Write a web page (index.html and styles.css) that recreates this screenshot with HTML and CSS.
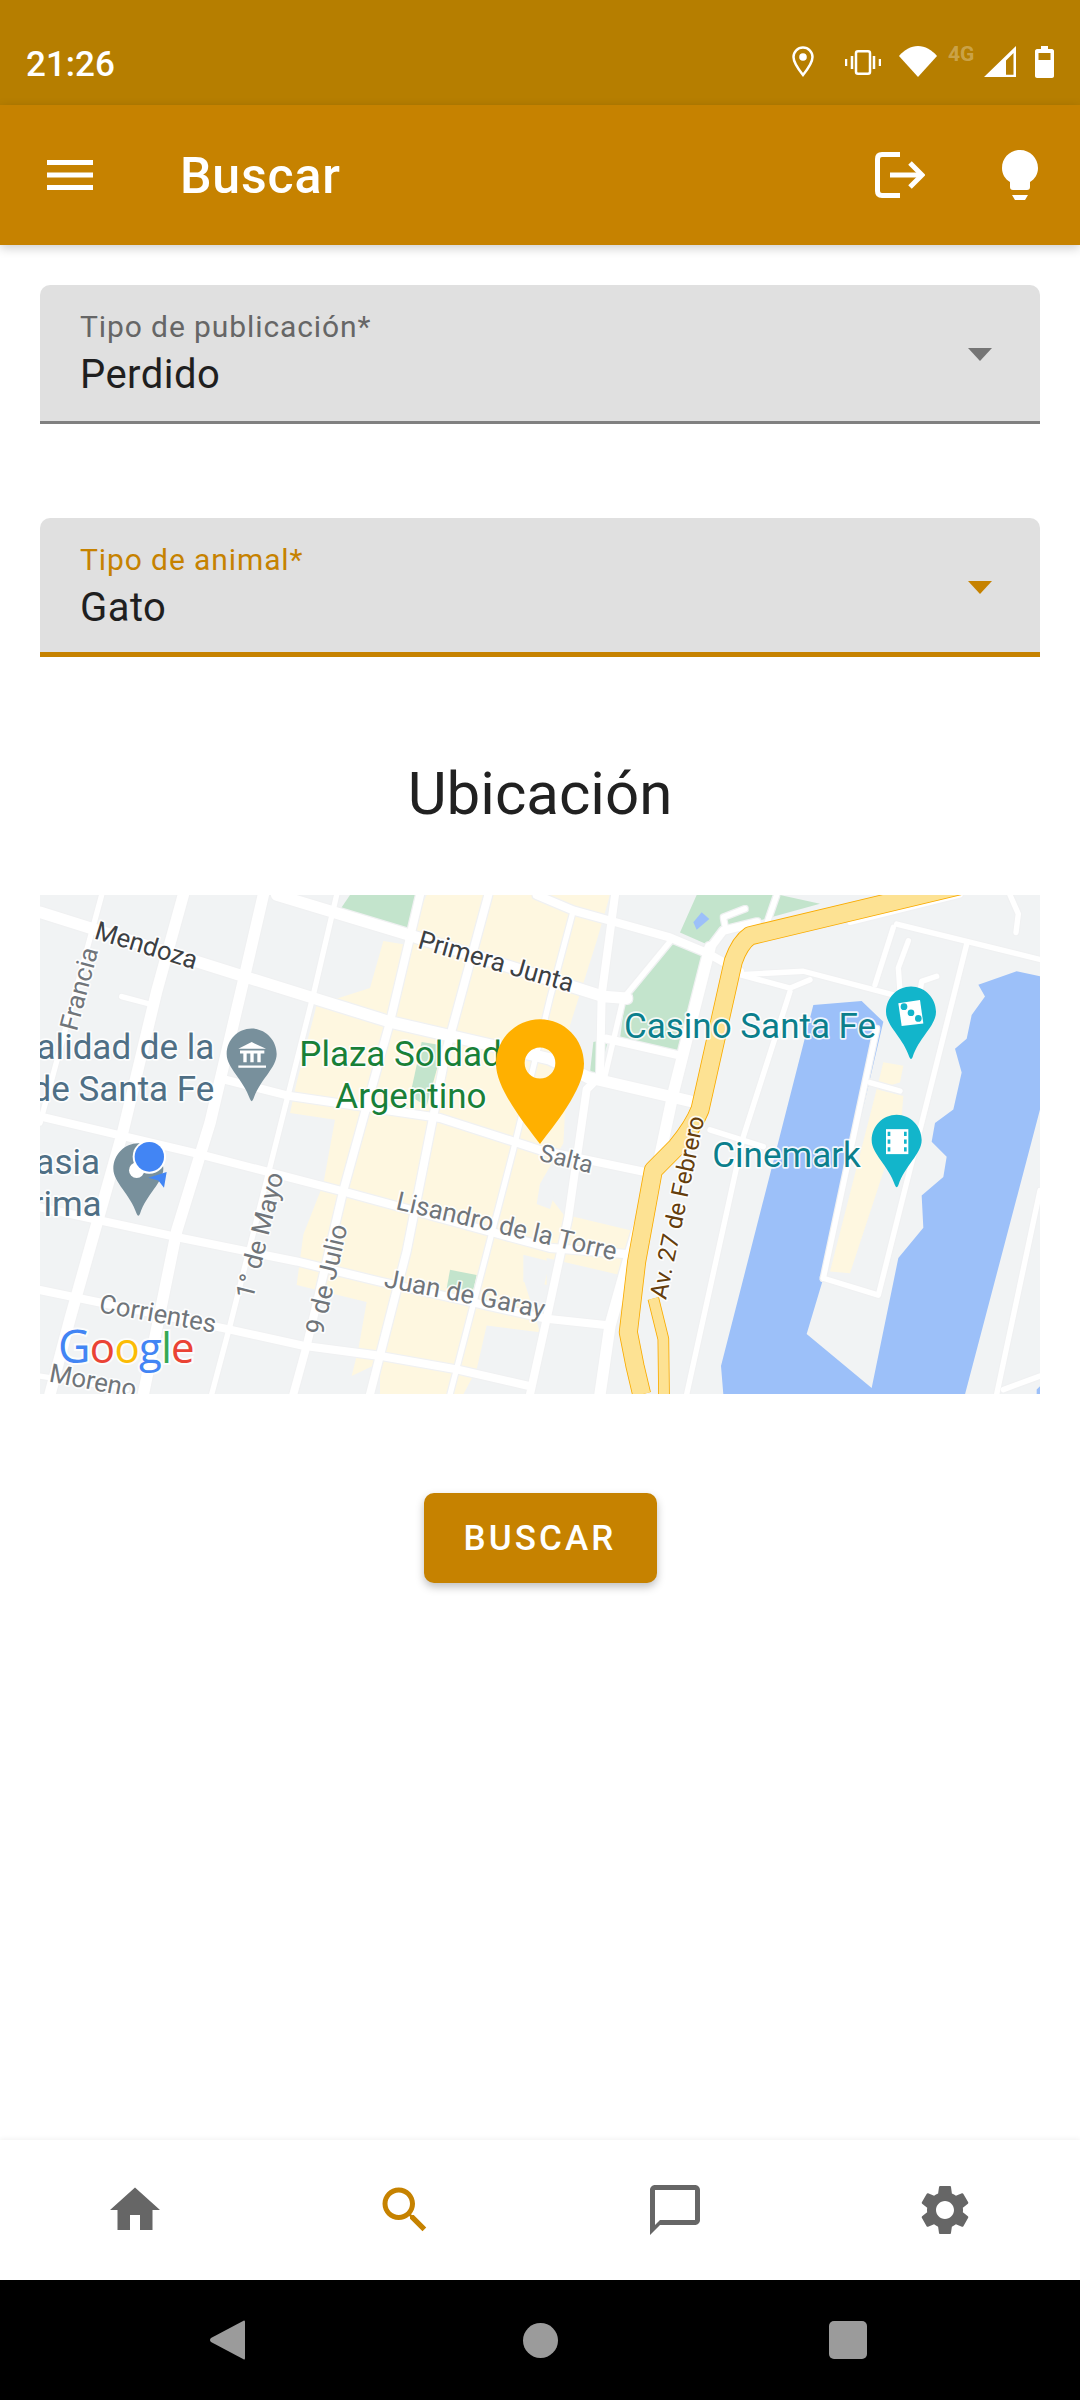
FILE: index.html
```html
<!DOCTYPE html>
<html>
<head>
    <title>Buscar</title>
    <link rel="stylesheet" href="styles.css">
</head>
<body>
    <div class="status-bar">
        <span class="time">21:26</span>
        <div class="status-icons">
            <svg class="st-pin" width="22" height="31" viewBox="0 0 22 31"><path d="M11 1.500C5.700 1.500 1.500 5.700 1.500 11C1.500 17 7 24 11 29C15 24 20.500 17 20.500 11C20.500 5.700 16.300 1.500 11 1.500Z" fill="none" stroke="#fff" stroke-width="2.500"/><circle cx="11" cy="11" r="3.800" fill="#fff"/></svg>
            <svg class="st-vibrate" width="36" height="25" viewBox="0 0 36 25"><g fill="none" stroke="#fff" stroke-width="2.500"><rect x="11" y="1.300" width="14" height="22.400" rx="2"/><path d="M7 6V19M29 6V19"/></g><path d="M1 9V16M35 9V16" stroke="#fff" stroke-width="2.500"/></svg>
            <svg class="st-wifi" width="38" height="31" viewBox="0 0 38 31"><path d="M19 31L0 10C5 4 12 0 19 0C26 0 33 4 38 10Z" fill="#fff"/></svg>
            <span class="st-net">4G</span>
            <svg class="st-signal" width="32" height="31" viewBox="0 0 32 31"><path fill-rule="evenodd" d="M32 0V31H0ZM29.500 7L22 14.500V28.800H29.500Z" fill="#fff"/></svg>
            <svg class="st-battery" width="19" height="32" viewBox="0 0 19 32"><path fill-rule="evenodd" d="M6 0H13V3H17C18 3 19 4 19 5V30C19 31 18 32 17 32H2C1 32 0 31 0 30V5C0 4 1 3 2 3H6ZM3.500 7V14H15.500V7Z" fill="#fff"/></svg>
        </div>
    </div>

    <div class="app-bar">
        <svg class="menu-icon" width="46" height="30" viewBox="0 0 46 30"><path d="M0 0H46V5H0ZM0 12.500H46V17.500H0ZM0 25H46V30H0Z" fill="#fff"/></svg>
        <span class="app-title">Buscar</span>
        <svg class="exit-icon" width="50" height="46" viewBox="0 0 50 46"><g fill="none" stroke="#fff" stroke-width="5"><path d="M25 2.500H7Q2.500 2.500 2.500 7V39Q2.500 43.500 7 43.500H25"/><path d="M15 23H46"/><path d="M35 11L47 23L35 35"/></g></svg>
        <svg class="bulb-icon" width="36" height="50" viewBox="0 0 36 50"><path d="M18 0C28 0 36 8 36 18C36 24 33 29 28 32V37C28 39 27 40 25 40H11C9 40 8 39 8 37V32C3 29 0 24 0 18C0 8 8 0 18 0Z" fill="#fff"/><path d="M10 45H26L23 50H13Z" fill="#fff"/></svg>
    </div>

    <div class="content">
        <div class="field">
            <div>
                <div class="field-label">Tipo de publicación*</div>
                <div class="field-value">Perdido</div>
            </div>
            <div class="arrow"></div>
        </div>
        <div class="field field-active">
            <div>
                <div class="field-label">Tipo de animal*</div>
                <div class="field-value">Gato</div>
            </div>
            <div class="arrow"></div>
        </div>

        <h2 class="section-title">Ubicación</h2>

        <svg class="map" width="1000" height="499" viewBox="30 44 3000 1479" preserveAspectRatio="none">
            <defs>
                <filter id="casing" x="-5%" y="-5%" width="110%" height="110%">
                    <feMorphology in="SourceAlpha" operator="dilate" radius="2.500"/>
                    <feColorMatrix values="0 0 0 0 .87  0 0 0 0 .88  0 0 0 0 .89  0 0 0 1 0"/>
                </filter>
                <path id="drop" d="M0 -75C41 -75 75 -41 75 0C75 42 24 76 5 134Q0 146 -5 134C-24 76 -75 42 -75 0C-75 -41 -41 -75 0 -75Z"/>
            </defs>
            <rect class="land" x="30" y="44" width="3000" height="1480"/>

            <polygon class="cream" points="1190,44 1740,44 1700,180 1620,430 1600,780 1530,900 1600,990 1810,1040 1770,1170 1550,1120 1550,1200 1480,1180 1530,1340 1370,1320 1340,1450 1300,1524 1050,1524 1050,1430 965,1470 985,1390 1010,1250 800,1200 820,1050 880,900 915,710 780,690 800,600 860,370 1020,320 1060,180 1120,190"/>
            <polygon class="cream" points="2560,540 2620,550 2610,600 2540,620 2620,640 2615,700 2460,1165 2400,1160 2540,620"/>
            <polygon class="land" points="1530,900 1580,910 1560,975 1520,960"/>
            <polygon class="land" points="1480,1110 1560,1130 1540,1210 1480,1190"/>

            <polygon class="park" points="960,44 925,95 1130,160 1160,44"/>
            <polygon class="park" points="2000,44 1950,155 2030,190 2080,150 2150,130 2370,70 2250,44"/>
            <polygon class="park" points="1930,185 2030,225 2010,300 1950,510 1770,470 1785,355"/>
            <polygon class="park" points="1690,480 1735,470 1710,570 1680,570"/>
            <polygon class="park" points="1175,480 1240,490 1190,670 1140,640"/>
            <polygon class="park" points="1260,1155 1340,1170 1330,1215 1250,1210"/>

            <polygon class="water" points="2350,370 2495,358 2560,420 2380,1180 2330,1345 2525,1505 2605,1120 2680,1030 2675,935 2740,880 2750,820 2705,775 2715,720 2770,680 2795,570 2775,500 2810,470 2825,400 2865,345 2845,310 2960,270 3030,285 3030,680 2805,1524 2080,1524 2073,1440"/>
            <polygon class="water" points="1990,125 2015,95 2038,115 2000,147"/>
            <polygon class="water" points="3020,1510 3030,1500 3030,1524 3020,1524"/>

            <use href="#roads" filter="url(#casing)"/>
            <g id="roads" class="roads">
                <path class="s3" d="M740 44L1130 160L1720 345L1790 350"/>
                <path class="s2" d="M1520 44L1630 90L1740 120L1920 170L2030 215L2130 270"/>
                <path class="s2" d="M1730 470L1950 520"/>
                <path class="s3" d="M30 95L640 285L1080 420L1560 530L1675 585L1980 655"/>
                <path class="s1" d="M275 345L370 370"/>
                <path class="s2" d="M580 590L780 640L1230 705L1530 800L1870 870"/>
                <path class="s2" d="M30 700L500 810L930 920L1560 1090L1810 1110"/>
                <path class="s2" d="M30 970L450 1060L800 1130L1050 1190L1550 1300L1740 1320"/>
                <path class="s2" d="M30 1215L590 1330L820 1380L1050 1410L1280 1450L1500 1500"/>
                <path class="s1" d="M30 1470L290 1510"/>

                <path class="s1" d="M215 44L30 720"/>
                <path class="s3" d="M460 44L380 330L280 740L120 1300L60 1524"/>
                <path class="s3" d="M700 44L640 300L540 720L440 1040L340 1524"/>
                <path class="s1" d="M920 44L850 340L720 850L600 1320L545 1524"/>
                <path class="s2" d="M1170 44L1080 420L940 920L830 1380L790 1524"/>
                <path class="s2" d="M1375 44L1250 500L1210 700L1130 1100L1020 1524"/>
                <path class="s1" d="M1630 90L1560 350L1450 800L1260 1524"/>
                <path class="s2" d="M1755 44L1715 340L1710 580L1670 620L1615 1000L1550 1300L1500 1524"/>
                <path class="s1" d="M1930 170L1780 350L1725 580"/>
                <path class="s3" d="M2040 200L1930 630L1885 840L1800 1110L1740 1320L1710 1524"/>
                <path class="s2" d="M2030 215L2080 150L2180 125"/>
                <path class="s1" d="M2085 135L2080 110L2145 85"/>
                <path class="s1" d="M2240 44L2210 130"/>
                <path class="s1" d="M2130 280L2320 270L2590 340"/>
                <path class="s1" d="M2130 280L2280 320L2340 295"/>
                <path class="s1" d="M2460 125L2790 44"/>
                <path class="s1" d="M2600 130L3030 235"/>
                <path class="s1" d="M2280 330L2140 760L1970 1524"/>
                <path class="s1" d="M2040 740L2200 790"/>
                <path class="s1" d="M2590 140L2535 310"/>
                <path class="s1" d="M2635 180L2605 260L2610 330"/>
                <path class="s1" d="M2720 285L2675 300L2670 330"/>
                <path class="s1" d="M2810 190L2545 1230L2380 1180"/>
                <path class="s1" d="M2540 440L2380 1180"/>
                <path class="s1" d="M2520 600L2610 625"/>
                <path class="s1" d="M2940 44L2965 100L2958 155"/>
                <path class="s1" d="M3030 920L2900 1524"/>
                <path class="s1" d="M2920 1510L3030 1470"/>
            </g>

            <path class="highway-edge" d="M2900 -10L2160 165Q2130 185 2110 240L2010 680Q1990 730 1940 790L1870 860L1820 1130L1795 1340L1815 1440L1835 1524"/>
            <path class="highway-edge thin" d="M1870 1240L1900 1360L1902 1524"/>
            <path class="highway" d="M2900 -10L2160 165Q2130 185 2110 240L2010 680Q1990 730 1940 790L1870 860L1820 1130L1795 1340L1815 1440L1835 1524"/>
            <path class="highway thin" d="M1870 1240L1900 1360L1902 1524"/>

            <text class="lbl street-dark" transform="translate(190 172) rotate(17)">Mendoza</text>
            <text class="lbl street" transform="translate(140 450) rotate(-75)">Francia</text>
            <text class="lbl street-dark" transform="translate(1160 200) rotate(16)">Primera Junta</text>
            <text class="lbl street small" transform="translate(1525 830) rotate(14)">Salta</text>
            <text class="lbl street" transform="translate(1095 975) rotate(13)">Lisandro de la Torre</text>
            <text class="lbl street" transform="translate(1060 1205) rotate(11)">Juan de Garay</text>
            <text class="lbl street" transform="translate(205 1280) rotate(10)">Corrientes</text>
            <text class="lbl street" transform="translate(55 1485) rotate(11)">Moreno</text>
            <text class="lbl street" transform="translate(668 1245) rotate(-76)">1° de Mayo</text>
            <text class="lbl street" transform="translate(878 1350) rotate(-77)">9 de Julio</text>
            <text class="lbl avenue small" transform="translate(1908 1245) rotate(-78)">Av. 27 de Febrero</text>

            <text class="lbl big poi-grey" x="553" y="530" text-anchor="end">alidad de la</text>
            <text class="lbl big poi-grey" x="553" y="655" text-anchor="end">de Santa Fe</text>
            <text class="lbl big poi-grey" x="210" y="872" text-anchor="end">asia</text>
            <text class="lbl big poi-grey" x="215" y="995" text-anchor="end">rima</text>
            <text class="lbl big poi-green" x="808" y="550">Plaza Soldad</text>
            <text class="lbl big poi-green" x="916" y="675">Argentino</text>
            <text class="lbl big poi-teal" x="1782" y="468">Casino Santa Fe</text>
            <text class="lbl big poi-teal" x="2047" y="850">Cinemark</text>

            <use href="#drop" class="pin-grey" x="665" y="515"/>
            <g class="icon-white">
                <polygon points="625,500 665,480 708,500"/>
                <path d="M630 505H703V514H692V540H682V514H671V540H661V514H650V540H640V514H630ZM625 549H708V556H625Z"/>
            </g>

            <use href="#drop" class="pin-grey" x="325" y="855"/>
            <circle class="icon-white" cx="320" cy="860" r="23"/>
            <polygon class="my-arrow" points="355,882 410,865 402,912 385,890"/>
            <circle class="my-ring" cx="358" cy="820" r="50"/>
            <circle class="my-dot" cx="358" cy="820" r="44"/>

            <use href="#drop" class="pin-teal" x="2643" y="390"/>
            <polygon class="icon-white" points="2605,365 2670,355 2680,425 2615,432"/>
            <g class="pin-teal">
                <circle cx="2622" cy="375" r="10"/>
                <circle cx="2643" cy="393" r="10"/>
                <circle cx="2665" cy="410" r="10"/>
            </g>

            <use href="#drop" class="pin-teal" x="2600" y="770"/>
            <rect class="icon-white" x="2568" y="738" width="67" height="74"/>
            <path class="pin-teal" d="M2573 746H2581V758H2573ZM2573 769H2581V781H2573ZM2573 792H2581V804H2573ZM2622 746H2630V758H2622ZM2622 769H2630V781H2622ZM2622 792H2630V804H2622Z"/>

            <path class="main-pin" fill-rule="evenodd" d="M1530 412C1603 412 1662 471 1662 544C1662 620 1570 730 1530 782C1490 730 1398 620 1398 544C1398 471 1457 412 1530 412ZM1530 496A46 46 0 1 0 1530 588A46 46 0 1 0 1530 496Z"/>

            <text class="google" x="84" y="1431"><tspan class="g-blue g-cap">G</tspan><tspan class="g-red">o</tspan><tspan class="g-yellow">o</tspan><tspan class="g-blue">g</tspan><tspan class="g-green">l</tspan><tspan class="g-red">e</tspan></text>
        </svg>

        <div class="button-row">
            <button class="search-button">BUSCAR</button>
        </div>
    </div>

    <div class="bottom-nav">
        <div class="nav-item"><svg width="60" height="60" viewBox="0 0 24 24"><path d="M10 20v-6h4v6h5v-8h3L12 3 2 12h3v8z"/></svg></div>
        <div class="nav-item nav-active"><svg width="60" height="60" viewBox="0 0 24 24"><path d="M15.500 14h-.79l-.28-.27C15.410 12.590 16 11.110 16 9.500 16 5.910 13.090 3 9.500 3S3 5.910 3 9.500 5.910 16 9.500 16c1.610 0 3.090-.59 4.230-1.570l.27.28v.79l5 4.990L20.490 19l-4.990-5zm-6 0C7.010 14 5 11.990 5 9.500S7.010 5 9.500 5 14 7.010 14 9.500 11.990 14 9.500 14z"/></svg></div>
        <div class="nav-item"><svg width="60" height="60" viewBox="0 0 24 24"><path d="M20 2H4c-1.100 0-2 .9-2 2v18l4-4h14c1.100 0 2-.9 2-2V4c0-1.100-.9-2-2-2zm0 14H6l-2 2V4h16v12z"/></svg></div>
        <div class="nav-item"><svg width="60" height="60" viewBox="0 0 24 24"><path d="M19.140 12.940c.04-.3.06-.61.06-.94 0-.32-.02-.64-.07-.94l2.030-1.580c.18-.14.23-.41.12-.61l-1.920-3.320c-.12-.22-.37-.29-.59-.22l-2.390.96c-.5-.38-1.030-.7-1.620-.94l-.36-2.540c-.04-.24-.24-.41-.48-.41h-3.840c-.24 0-.43.17-.47.41l-.36 2.540c-.59.24-1.130.57-1.620.94l-2.390-.96c-.22-.08-.47 0-.59.22L2.740 8.870c-.12.21-.08.47.12.61l2.030 1.580c-.05.3-.09.63-.09.94s.02.64.07.94l-2.030 1.580c-.18.14-.23.41-.12.61l1.920 3.320c.12.22.37.29.59.22l2.390-.96c.5.38 1.030.7 1.620.94l.36 2.540c.05.24.24.41.48.41h3.840c.24 0 .44-.17.47-.41l.36-2.540c.59-.24 1.130-.56 1.620-.94l2.390.96c.22.08.47 0 .59-.22l1.920-3.320c.12-.22.07-.47-.12-.61l-2.010-1.580zM12 15.600c-1.980 0-3.600-1.620-3.600-3.600s1.620-3.600 3.600-3.600 3.600 1.620 3.600 3.600-1.620 3.600-3.600 3.600z"/></svg></div>
    </div>

    <div class="system-nav">
        <svg class="sys-back" width="35" height="40" viewBox="0 0 35 40"><path d="M34 0.500Q35 0.200 35 2V38Q35 39.800 34 39.500L1 22Q-1 20 1 18Z" fill="#9b9b9b"/></svg>
        <div class="sys-home"></div>
        <div class="sys-recent"></div>
    </div>
</body>
</html>
```

FILE: styles.css
```css
html, body {
    margin: 0;
    padding: 0;
}

body {
    width: 1080px;
    height: 2400px;
    display: flex;
    flex-direction: column;
    overflow: hidden;
    background-color: white;
    font-family: Roboto, sans-serif;
}

.status-bar {
    height: 105px;
    box-sizing: border-box;
    padding: 46px 26px 0 26px;
    display: flex;
    justify-content: space-between;
    align-items: flex-start;
    background-color: #b67e00;
    color: white;
}

.time {
    font-size: 35px;
    font-weight: 500;
    line-height: 34px;
    padding-top: 2px;
}

.status-icons {
    display: flex;
    align-items: flex-start;
}

.st-vibrate {
    margin-left: 31px;
    margin-top: 4px;
}

.st-wifi {
    margin-left: 18px;
}

.st-net {
    margin-left: 11px;
    width: 29px;
    font-size: 21px;
    font-weight: 700;
    line-height: 17px;
    color: rgba(255, 255, 255, 0.3);
}

.st-signal {
    margin-left: 7px;
}

.st-battery {
    margin-left: 19px;
}

.app-bar {
    height: 140px;
    position: relative;
    z-index: 1;
    display: flex;
    align-items: center;
    background-color: #c68200;
    box-shadow: 0 3px 10px rgba(0, 0, 0, 0.2);
    color: white;
}

.menu-icon {
    margin-left: 47px;
}

.app-title {
    margin-left: 87px;
    padding-top: 2px;
    flex: 1;
    font-size: 50px;
    font-weight: 500;
    letter-spacing: 0.8px;
}

.exit-icon {
    margin-right: 77px;
}

.bulb-icon {
    margin-right: 42px;
}

.content {
    flex: 1;
    padding: 40px 40px 0;
}

.field {
    height: 139px;
    box-sizing: border-box;
    padding: 24px 30px 0 40px;
    display: flex;
    justify-content: space-between;
    background-color: #e0e0e0;
    border-radius: 10px 10px 0 0;
    border-bottom: 3px solid #808080;
}

.field + .field {
    margin-top: 94px;
}

.field-label {
    font-size: 30px;
    line-height: 36px;
    letter-spacing: 0.9px;
    color: #666666;
}

.field-value {
    padding-top: 6px;
    font-size: 40px;
    line-height: 48px;
    letter-spacing: 0.45px;
    color: #1f1f1f;
}

.arrow {
    margin-top: 39px;
    margin-right: 18px;
    width: 0;
    height: 0;
    border-left: 12.5px solid transparent;
    border-right: 12.5px solid transparent;
    border-top: 13px solid #757575;
}

.field-active {
    border-bottom: 5px solid #c68200;
}

.field-active .field-label {
    color: #c68200;
}

.field-active .arrow {
    border-top-color: #c68200;
}

.section-title {
    margin: 0;
    padding-top: 102px;
    height: 136px;
    font-size: 60px;
    font-weight: 400;
    line-height: 70px;
    text-align: center;
    color: #212121;
}

.map {
    display: block;
}

.land {
    fill: #f1f3f4;
}

.cream {
    fill: #fef7e0;
}

.park {
    fill: #c3e4cc;
}

.water {
    fill: #9cc0f9;
}

.roads path {
    fill: none;
    stroke: white;
    stroke-linejoin: round;
    stroke-linecap: round;
}

.s1 {
    stroke-width: 16px;
}

.s2 {
    stroke-width: 24px;
}

.s3 {
    stroke-width: 34px;
}

.highway, .highway-edge {
    fill: none;
    stroke-linejoin: round;
}

.highway {
    stroke: #fde293;
    stroke-width: 52px;
}

.highway-edge {
    stroke: #f9ab00;
    stroke-width: 57px;
}

.highway.thin {
    stroke-width: 30px;
}

.highway-edge.thin {
    stroke-width: 35px;
}

.lbl {
    font-family: Roboto, sans-serif;
    font-size: 77px;
    paint-order: stroke;
    stroke: white;
    stroke-opacity: 0.85;
    stroke-width: 10px;
    stroke-linejoin: round;
}

.lbl.small {
    font-size: 72px;
}

.street {
    fill: #70757a;
}

.street-dark {
    fill: #3c4043;
}

.avenue {
    fill: #653d0c;
}

.lbl.big {
    font-size: 105px;
}

.poi-grey {
    fill: #4f6f85;
}

.poi-green {
    fill: #188038;
}

.poi-teal {
    fill: #0b7f8c;
}

.pin-grey {
    fill: #78909c;
}

.pin-teal {
    fill: #12b5cb;
}

.icon-white {
    fill: white;
}

.my-ring {
    fill: white;
}

.my-dot, .my-arrow {
    fill: #4285f4;
}

.main-pin {
    fill: #ffb000;
}

.google {
    font-family: "Open Sans", sans-serif;
    font-size: 126px;
    font-weight: 500;
    letter-spacing: -2px;
    paint-order: stroke;
    stroke: white;
    stroke-opacity: 0.8;
    stroke-width: 12px;
}

.g-cap {
    font-size: 134px;
}

.g-blue {
    fill: #4285f4;
}

.g-red {
    fill: #ea4335;
}

.g-yellow {
    fill: #fbbc05;
}

.g-green {
    fill: #34a853;
}

.button-row {
    display: flex;
    justify-content: center;
    padding-top: 99px;
}

.search-button {
    width: 233px;
    height: 90px;
    padding: 0;
    border: none;
    border-radius: 10px;
    background-color: #c68200;
    box-shadow: 0 4px 8px rgba(0, 0, 0, 0.25);
    font-family: Roboto, sans-serif;
    font-size: 35px;
    font-weight: 500;
    letter-spacing: 3.1px;
    color: white;
}

.bottom-nav {
    height: 140px;
    position: relative;
    display: flex;
    background-color: white;
    box-shadow: 0 -1px 5px rgba(0, 0, 0, 0.06);
}

.nav-item {
    flex: 1;
    display: flex;
    justify-content: center;
    align-items: center;
    fill: #666666;
}

.nav-active {
    fill: #c68200;
}

.system-nav {
    height: 120px;
    box-sizing: border-box;
    padding-left: 210px;
    display: flex;
    align-items: center;
    background-color: black;
}

.sys-home {
    margin-left: 278px;
    width: 35px;
    height: 35px;
    border-radius: 50%;
    background-color: #9b9b9b;
}

.sys-recent {
    margin-left: 271px;
    width: 38px;
    height: 38px;
    border-radius: 5px;
    background-color: #9b9b9b;
}
```
